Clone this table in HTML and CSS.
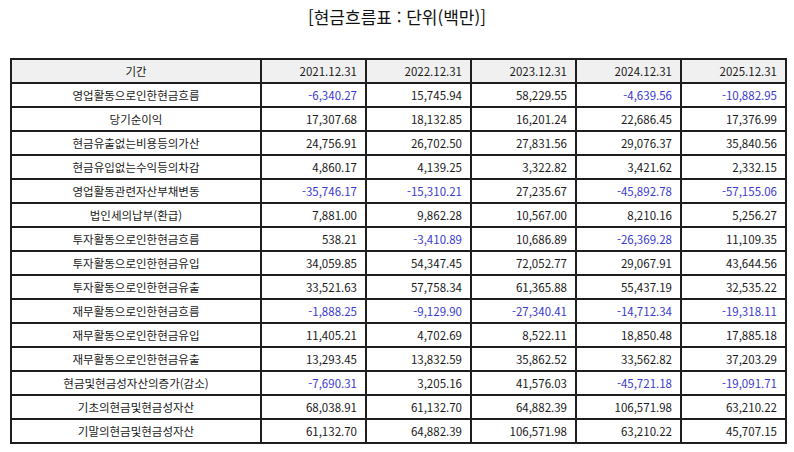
FILE: index.html
```html
<!DOCTYPE html>
<html lang="ko">
<head>
<meta charset="utf-8">
<title>현금흐름표</title>
<link rel="stylesheet" href="styles.css">
</head>
<body>
<div class="page">
<h1 class="title">[현금흐름표 : 단위(백만)]</h1>
<table class="cf">
<colgroup>
<col class="c-label"><col class="c-num"><col class="c-num"><col class="c-num"><col class="c-num"><col class="c-num">
</colgroup>
<thead>
<tr><th class="lbl">기간</th><th>2021.12.31</th><th>2022.12.31</th><th>2023.12.31</th><th>2024.12.31</th><th>2025.12.31</th></tr>
</thead>
<tbody>
<tr><td class="lbl">영업활동으로인한현금흐름</td><td class="neg">-6,340.27</td><td>15,745.94</td><td>58,229.55</td><td class="neg">-4,639.56</td><td class="neg">-10,882.95</td></tr>
<tr><td class="lbl">당기순이익</td><td>17,307.68</td><td>18,132.85</td><td>16,201.24</td><td>22,686.45</td><td>17,376.99</td></tr>
<tr><td class="lbl">현금유출없는비용등의가산</td><td>24,756.91</td><td>26,702.50</td><td>27,831.56</td><td>29,076.37</td><td>35,840.56</td></tr>
<tr><td class="lbl">현금유입없는수익등의차감</td><td>4,860.17</td><td>4,139.25</td><td>3,322.82</td><td>3,421.62</td><td>2,332.15</td></tr>
<tr><td class="lbl">영업활동관련자산부채변동</td><td class="neg">-35,746.17</td><td class="neg">-15,310.21</td><td>27,235.67</td><td class="neg">-45,892.78</td><td class="neg">-57,155.06</td></tr>
<tr><td class="lbl">법인세의납부(환급)</td><td>7,881.00</td><td>9,862.28</td><td>10,567.00</td><td>8,210.16</td><td>5,256.27</td></tr>
<tr><td class="lbl">투자활동으로인한현금흐름</td><td>538.21</td><td class="neg">-3,410.89</td><td>10,686.89</td><td class="neg">-26,369.28</td><td>11,109.35</td></tr>
<tr><td class="lbl">투자활동으로인한현금유입</td><td>34,059.85</td><td>54,347.45</td><td>72,052.77</td><td>29,067.91</td><td>43,644.56</td></tr>
<tr><td class="lbl">투자활동으로인한현금유출</td><td>33,521.63</td><td>57,758.34</td><td>61,365.88</td><td>55,437.19</td><td>32,535.22</td></tr>
<tr><td class="lbl">재무활동으로인한현금흐름</td><td class="neg">-1,888.25</td><td class="neg">-9,129.90</td><td class="neg">-27,340.41</td><td class="neg">-14,712.34</td><td class="neg">-19,318.11</td></tr>
<tr><td class="lbl">재무활동으로인한현금유입</td><td>11,405.21</td><td>4,702.69</td><td>8,522.11</td><td>18,850.48</td><td>17,885.18</td></tr>
<tr><td class="lbl">재무활동으로인한현금유출</td><td>13,293.45</td><td>13,832.59</td><td>35,862.52</td><td>33,562.82</td><td>37,203.29</td></tr>
<tr><td class="lbl">현금및현금성자산의증가(감소)</td><td class="neg">-7,690.31</td><td>3,205.16</td><td>41,576.03</td><td class="neg">-45,721.18</td><td class="neg">-19,091.71</td></tr>
<tr><td class="lbl">기초의현금및현금성자산</td><td>68,038.91</td><td>61,132.70</td><td>64,882.39</td><td>106,571.98</td><td>63,210.22</td></tr>
<tr><td class="lbl">기말의현금및현금성자산</td><td>61,132.70</td><td>64,882.39</td><td>106,571.98</td><td>63,210.22</td><td>45,707.15</td></tr>
</tbody>
</table>
</div>
</body>
</html>
```
FILE: styles.css
```css
html, body {
  margin: 0;
  padding: 0;
  background: #ffffff;
}
body {
  font-family: "Noto Sans CJK KR", "Noto Sans", sans-serif;
  color: #1a1a1a;
}
.page {
  width: 794px;
  height: 452px;
  padding: 5px 10px 0 10px;
  box-sizing: border-box;
}
.title {
  margin: 0;
  font-size: 17px;
  font-weight: 400;
  text-align: center;
  line-height: 24px;
  color: #111;
}
.cf {
  margin-top: 29px;
  width: 774px;
  border-collapse: collapse;
  table-layout: fixed;
  font-size: 11.5px;
}
.c-label { width: 250px; }
.c-num { width: 105px; }
.cf th, .cf td {
  border: 2px solid #1e1e1e;
  height: 22px;
  padding: 0 8px;
  text-align: right;
  font-weight: 400;
  line-height: 20px;
  white-space: nowrap;
}
.cf th {
  background: #f0f0f0;
}
.cf .lbl {
  text-align: center;
}
.cf .neg {
  color: #3a3acf;
}
```
